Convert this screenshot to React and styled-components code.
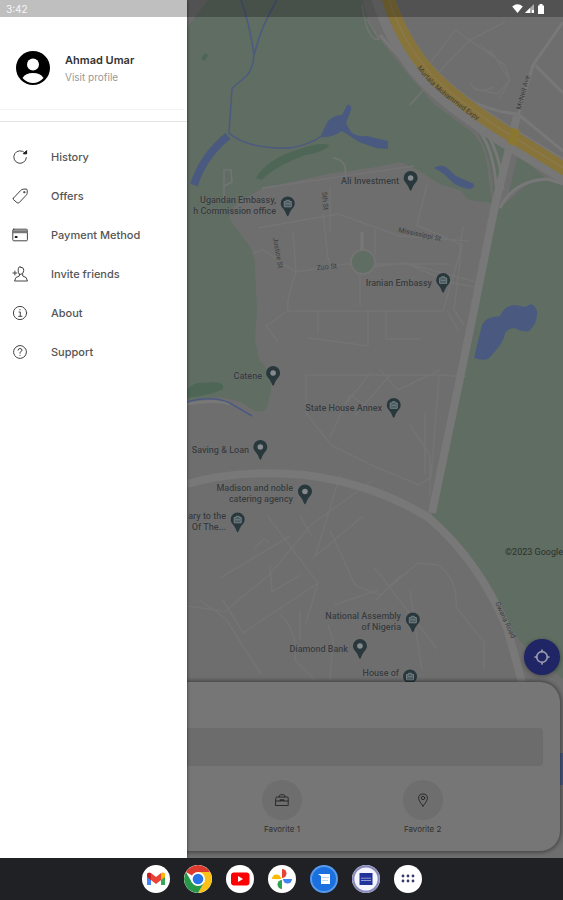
import React from "react";
import styled, { createGlobalStyle } from "styled-components";

const GlobalStyle = createGlobalStyle`
  *, *::before, *::after { box-sizing: border-box; }
  body { margin: 0; background: #6e6e6e; }
  button, input { font: inherit; color: inherit; border: 0; padding: 0; background: none; }
  svg { display: block; }
`;

const Screen = styled.div`
  position: relative;
  display: flex;
  flex-direction: column;
  min-height: 100vh;
  font-family: Inter, "Open Sans", sans-serif;
`;

const Stage = styled.main`
  position: relative;
  flex: 1;
  display: flex;
  overflow: hidden;
`;

const StatusBar = styled.header`
  position: absolute;
  inset: 0 0 auto;
  z-index: 5;
  display: flex;
  align-items: center;
  justify-content: space-between;
  height: 17px;
  padding: 0 18px 0 6px;
  background: rgba(0, 0, 0, 0.25);
  color: #f6f6f6;
  font-size: 10px;
  line-height: 16px;
`;

const StatusIcons = styled.div`
  display: flex;
  align-items: center;
  gap: 2px;
`;

const Drawer = styled.aside`
  position: relative;
  z-index: 3;
  flex: 0 0 187px;
  padding-top: 17px;
  background: #fff;
  box-shadow: 0 0 3px rgba(0, 0, 0, 0.6);
`;

const Profile = styled.a`
  display: flex;
  align-items: center;
  gap: 15px;
  height: 93px;
  margin-right: 3px;
  padding: 10px 0 0 16px;
  border-bottom: 1px solid #f4f4f4;
  color: #333;
  text-decoration: none;
`;

const ProfileText = styled.span`
  display: grid;
  gap: 1px;
`;

const ProfileName = styled.span`
  font-size: 11px;
  font-weight: 600;
  line-height: 16px;
`;

const ProfileHint = styled.span`
  color: #999;
  font-size: 10px;
  line-height: 16px;
`;

const Nav = styled.nav`
  display: grid;
  margin-top: 11px;
  padding-top: 15px;
  border-top: 1px solid #e4e4e4;
`;

const NavLink = styled.a`
  display: flex;
  align-items: center;
  gap: 23px;
  height: 39px;
  padding-left: 12px;
  color: #555;
  font-size: 11px;
  font-weight: 500;
  line-height: 16px;
  text-decoration: none;
  svg { color: #444; }
`;

const MapArea = styled.section`
  position: absolute;
  inset: 0;
  background: #6e6e6e;
`;

const MapDrawing = styled.svg`
  width: 100%;
  height: 100%;
`;

const Place = styled.div`
  position: absolute;
  top: ${(p) => p.$y}px;
  left: ${(p) => p.$x}px;
  display: flex;
  align-items: center;
  gap: 4px;
  transform: translate(-100%, -50%);
  color: #373b3e;
  font: 500 9px/11px Roboto, sans-serif;
  text-align: right;
  white-space: pre;
  text-shadow: 0 0 2px #7a7a7a;
`;

const Attribution = styled.small`
  position: absolute;
  top: 547px;
  right: 0;
  color: #2b302c;
  font: 400 9px/11px Roboto, sans-serif;
`;

const LocateButton = styled.button`
  position: absolute;
  right: 3px;
  bottom: 183px;
  display: grid;
  place-items: center;
  width: 36px;
  height: 36px;
  border-radius: 50%;
  background: #1f2565;
  color: #9a9cae;
  box-shadow: 0 1px 4px rgba(0, 0, 0, 0.35);
`;

const Sheet = styled.section`
  position: absolute;
  inset: auto 3px 7px 0;
  z-index: 2;
  padding: 46px 17px 16px 0;
  border-radius: 0 20px 20px 0;
  background: #767676;
  box-shadow: 0 0 4px 1px rgba(0, 0, 0, 0.45);
`;

const SearchField = styled.input`
  display: block;
  width: 100%;
  height: 38px;
  border-radius: 4px;
  background: #6c6c6c;
`;

const Favorites = styled.div`
  display: grid;
  grid-template-columns: repeat(3, 1fr);
  margin: 14px 50px 0 71px;
`;

const Favorite = styled.button`
  grid-column-start: ${(p) => p.$column};
  display: grid;
  justify-items: center;
  gap: 3px;
  color: #303030;
  font-size: 8px;
  line-height: 12px;
`;

const FavoriteDisc = styled.span`
  display: grid;
  place-items: center;
  width: 40px;
  height: 40px;
  border-radius: 50%;
  background: #6e6e6e;
  color: #2a2a2a;
`;

const Dock = styled.footer`
  position: relative;
  z-index: 4;
  display: flex;
  align-items: center;
  justify-content: center;
  gap: 14px;
  height: 42px;
  background: #202124;
`;

const AppButton = styled.button`
  display: grid;
  place-items: center;
  width: 28px;
  height: 28px;
  border-radius: 50%;
  background: ${(p) => p.$fill || "#fff"};
  overflow: hidden;
`;

const Stroke = ({ children, size = 16, width = 1 }) => (
  <svg width={size} height={size} viewBox="0 0 16 16" fill="none" stroke="currentColor" strokeWidth={width} strokeLinecap="round" strokeLinejoin="round" aria-hidden="true">
    {children}
  </svg>
);

const links = [
  ["History", <><path d="M14.400 8.600A6.300 6.300 0 1 1 12.600 3.600" /><path d="M11.800 4.800h2.800V2z" fill="#111" stroke="#111" /></>],
  ["Offers", <><path d="M1.400 10.200 8.500 2.600Q9.700 1.300 11.200 1.200L14 1q1.400.1 1.300 1.600l-.2 2.800q-.1 1-1 1.900l-7 7.400q-1 .8-2 0l-3.600-3q-.9-.8-.1-1.500z" /><circle cx="12.200" cy="4.200" r=".7" /></>],
  ["Payment Method", <><rect x=".8" y="2.200" width="14.600" height="11.600" rx="1" /><path d="M1 4h14.300M1 5.400h14.300" stroke="#777" strokeWidth="1.500" /><path d="M3.600 10h1" stroke="#111" strokeWidth="2" /></>],
  ["Invite friends", <><path d="M9 1.200q2.800 0 2.800 3.100T9 8.300 6.200 4.300 9 1.200zM7.400 8v2Q3 10.500 2.500 15h13q-.5-4.500-4.800-5V8" /><path d="M2.900 5v4M.9 7h4" /></>],
  ["About", <><circle cx="8" cy="8" r="6.600" /><path d="M7 7h1.300v4.200M6.600 11.300h3.300M8 4.500v.4" /></>],
  ["Support", <><circle cx="8" cy="8" r="6.400" strokeDasharray="4 .6" /><path d="M6 6.200Q6 4.500 8 4.500t2 1.600Q10 7.200 8 8.300v1M8 11.300v.2" /></>],
];

const places = [
  ["Ali Investment", 418, 181, "dot"],
  ["Ugandan Embassy,\nh Commission office", 295, 206, "case"],
  ["Iranian Embassy", 451, 283, "case"],
  ["Catene", 281, 376, "dot"],
  ["State House Annex", 401, 408, "case"],
  ["Saving & Loan", 268, 450, "dot"],
  ["Madison and noble\ncatering agency", 312, 494, "dot"],
  ["ary to the\nOf The...", 245, 522, "case"],
  ["National Assembly\nof Nigeria", 420, 622, "case"],
  ["Diamond Bank", 367, 649, "dot"],
];

const MapPin = ({ kind }) => (
  <svg width="15" height="21" viewBox="0 0 15 21" aria-hidden="true">
    <path d="M7.500.5a7 7 0 0 1 7 7c0 4.200-4.100 5.600-5.900 11.500L7.500 20.500 6.400 19C4.600 13.100.5 11.700.5 7.500a7 7 0 0 1 7-7z" fill="#29383d" />
    {kind === "dot" ? (
      <circle cx="7.500" cy="7.500" r="2.800" fill="#858b8d" />
    ) : (
      <path d="M4 5.500h2V4.300h3v1.200h2v5.300H4zM5 7.800h5" fill="#4c5c61" stroke="#748084" strokeWidth="1" />
    )}
  </svg>
);

const CityMap = () => (
  <MapArea aria-label="Map">
    <MapDrawing viewBox="0 0 563 858" preserveAspectRatio="xMinYMin slice">
      <g fill="#5f6d62">
        <path d="M208 0h155q3 20 15 37l32 40 25 28 30 22q16 10 21 32l6 44-23-3-9-10-20-6-24-15-16-7-24 5-44 6-69 15-16 9q-20 10-17 23l20 27q6 12 5 23l2 40-2 30 4 20 11 12 1 18-4 17q-4 6-12 4l-14-9-21-5-33 3V28z" />
        <path d="M478 134q25 8 33 14l-12 52h-6q2-36-15-66zM518 154l28 25q-22 0-38 18z" />
        <path d="M563 183q-30-8-48 12l-16 14-29 121-39 187 24 27 36 46 28 50 14 14 30 25z" />
      </g>
      <g fill="#4e6655">
        <path d="M256 178q12-20 44-29 20-7 29-4-2 6-24 10-32 12-43 25zM187 389q9-8 20-6 9-3 16 2v4q-12 6-36 9zM201 59l4-6 3 2-3 6z" />
      </g>
      <g fill="none" stroke="#747474" strokeWidth="1.500">
        <path d="M262 188l152-22M258 228l80-14 62 22 70 5M253 253l10-3 33 22 50-8 104 0M296 272l-3-40M288 311h155l16-55 4-30M296 272q-10 28-8 39l-22 15 12 16M323 214l5 44 5 12M360 270v36M330 187v45M375 230v25M360 268l45-5 75 20M405 263l47 20 30 5M427 185l-10 40 45 20-8 65 10 15M368 311v35l-60-8M386 311v28h35M318 311v22" />
        <path d="M306 413v-38h135l25 2M306 413l25 32 40 20 48 20 12-8 8-100M410 425l20 30v40M330 437l20-42 18 12M345 405l25-32M355 415l35-40M425 412v62M447 310l12 22M380 370l18 20 42-20" />
        <path d="M267 515l51 68-75 50-20-33M223 613l36-30 10-8 42-50 62-45M220 578l70-42M200 600l25 18 36 56M254 548l10-9 6 4M300 516l12 20M330 530l25 55 25 10 38-32 20 2q20 14 18 42l28 35v28M334 605l45-15M270 565l2 27 28-17M313 558l50-42M318 583l-12 40M340 475l-25 82M330 680l3-40-5-15M410 590l12 80M280 615q18 15 15 45l20 20M300 610v30M187 606l35 5M374 567l63 82M376 600l25-25" />
        <path d="M410 105l40-45 20-20 35-18M425 70l30-40 50 35 5 15-12 14-25-5M490 50l20 30-10 18M480 44l22 20M470 83q8 12 24 4" />
        <path d="M362 5q6 38 17 34l-12-20M333 158q15 2 12 18M224 198v-28h7l1 12-8 4" />
      </g>
      <g fill="none" stroke="#787878">
        <path d="M517 116L495 205 470 330 432 513" strokeWidth="8" />
        <path d="M563 22l-30 43-15 51M535 65l28 28M466 98q25 14 52 16l45 37M497 203q-1-72-37-88-33-25-80-80M485 130q16 25 18 60M500 208q14-28 48-29l15 5" strokeWidth="3" />
        <path d="M187 484q50-15 118-9 70 9 124 43 50 43 78 110l15 54" strokeWidth="8" />
        <path d="M362 232v28M187 404q30-5 43 0" strokeWidth="3" />
      </g>
      <path d="M382-5q14 46 43 79 25 27 80 62l66 40" fill="none" stroke="#777" strokeWidth="23" />
      <path d="M387-5q14 45 43 78 25 27 80 62l66 41" fill="none" stroke="#87743b" strokeWidth="13" />
      <path d="M387-5q14 45 43 78 25 27 80 62l66 41" fill="none" stroke="#8f7b55" strokeWidth="1" />
      <path d="M516 129l-4 16" stroke="#8b7830" strokeWidth="8" />
      <circle cx="363" cy="262" r="13" fill="#747474" />
      <circle cx="363" cy="262" r="11" fill="#5f6d62" />
      <g fill="none" stroke="#4c5a82" strokeWidth="1.500">
        <path d="M241 0q9 25 13 55M277 0q-16 26-23 55-1 17-11 24-10 8-11 10l-3 44q18 16 61 15 19-3 30-11" />
        <path d="M187 402q25-7 43 1l22 13" />
      </g>
      <path d="M228 136q-25 20-34 49" fill="none" stroke="#4a5980" strokeWidth="8" />
      <g fill="#4a5980">
        <path d="M320 137l8-16q6-6 14-6l5-10q5-1 4 5l-5 13 5 9q5 5 16 4l21 5v8l-12-1-17-6-17-11q-10 7-22 6zM434 168q5-4 12-1l10 9 18 8q1 4-4 5-12-1-20-9-6-7-16-12z" />
        <path d="M474 358l8-33q3-8 18-9 5-11 15-11l11 2q7-7 11 4 1 12-8 20-8 1-14-3-7 0-10 5-1 10-17 26-6 2-14-1zM560 753h3v32h-3z" />
      </g>
      <defs>
        <path id="expressway" d="M417 68q15 20 34 33 18 15 36 25" />
      </defs>
      <g fill="#3d3d3d" fontFamily="Roboto, sans-serif" fontSize="7">
        <text><textPath href="#expressway">Murtala Mohammed Expy</textPath></text>
        <text transform="translate(521 110) rotate(-75)">McNeil Ave</text>
        <text transform="translate(495 603) rotate(65)">Gwana Road</text>
        <text transform="translate(398 232) rotate(12)">Mississippi St</text>
        <text transform="translate(317 270) rotate(-5)">Zuo St</text>
        <text transform="translate(273 238) rotate(80)">Justice St</text>
        <text transform="translate(322 192) rotate(85)">5th St</text>
      </g>
    </MapDrawing>
    {places.map(([label, x, y, kind]) => (
      <Place key={label} $x={x} $y={y}>
        <span>{label}</span>
        <MapPin kind={kind} />
      </Place>
    ))}
    <Place $x={418} $y={679}>
      <span>{"House of\n "}</span>
      <MapPin kind="case" />
    </Place>
    <Attribution>©2023 Google</Attribution>
    <LocateButton aria-label="Find my location">
      <Stroke size={18} width={1.500}>
        <circle cx="8" cy="8" r="4.700" />
        <path d="M8 1.800v1.500M8 12.700v1.500M1.800 8h1.500M12.700 8h1.500" />
      </Stroke>
    </LocateButton>
  </MapArea>
);

const petal = "M14 14V5a4.500 4.500 0 0 1 0 9z";

const apps = [
  ["Gmail", "#fff", <><path d="M5 9v11h4V12z" fill="#4285f4" /><path d="M19 12v8h4V9z" fill="#34a853" /><path d="M5 9v3l9 7 9-7V9q-1-2-4-1l-5 4-5-4Q6 7 5 9z" fill="#ea4335" /><path d="M5 9v3l4 3V8Q6 7 5 9z" fill="#c5221f" /><path d="M19 8v7l4-3V9q-1-2-4-1z" fill="#fbbc04" /></>],
  ["Chrome", "#fff", <><path d="M14 14L1.900 7A14 14 0 0 1 26.100 7z" fill="#db3a2d" /><path d="M14 14V7h12.100A14 14 0 0 1 14 28l6-11z" fill="#fbc116" /><path d="M14 14l-6 3.500L1.900 7A14 14 0 0 0 14 28l6-10.500z" fill="#279847" /><circle cx="14" cy="14" r="7" fill="#fff" /><circle cx="14" cy="14" r="5.300" fill="#2674e8" /></>],
  ["YouTube", "#fff", <><rect x="5" y="7.500" width="18.500" height="13" rx="3" fill="#f00" /><path d="M12 11v6l5-3z" fill="#fff" /></>],
  ["Photos", "#fff", <><path d={petal} fill="#e94335" transform="translate(0 -1)" /><path d={petal} fill="#4285f4" transform="translate(1 0) rotate(90 14 14)" /><path d={petal} fill="#31a350" transform="translate(0 1) rotate(180 14 14)" /><path d={petal} fill="#fabb05" transform="translate(-1 0) rotate(270 14 14)" /></>],
  ["Messages", "#1b70df", <><circle cx="14" cy="14" r="13" fill="none" stroke="#5c99e6" strokeWidth="2" /><path d="M8 9l3 2v8h9V9z" fill="#fff" /><path d="M12 12.500h7M12 15.500h6" stroke="#bcd4f7" /></>],
  ["Cab", "#f5f5ff", <><circle cx="14" cy="14" r="12.800" fill="none" stroke="#898bbd" strokeWidth="2.400" /><rect x="7.500" y="8" width="13" height="12" fill="#20339a" /><path d="M9 13.200h10M9 15.500h10" stroke="#929bd0" /></>],
  ["All apps", "#fff", <g fill="#353a68">{[9, 14, 19].flatMap((x) => [11, 16].map((y) => <circle key={x + "-" + y} cx={x} cy={y} r="1.400" />))}</g>],
];

export default function App() {
  return (
    <>
      <GlobalStyle />
      <Screen>
        <StatusBar>
          <time>3:42</time>
          <StatusIcons>
            <svg width="11" height="9" viewBox="0 0 11 9"><path d="M5.500 9L.2 2.500Q5.500-1.800 10.800 2.500z" fill="#fff" /></svg>
            <svg width="10" height="9" viewBox="0 0 10 9"><path d="M0 9L9 0v9z" fill="#aaa" /><path d="M0 9l5-5v5z" fill="#fff" /><path d="M7 9V6h2v3z" fill="#fff" /></svg>
            <svg width="8" height="10" viewBox="0 0 8 10"><path d="M1 1.500h1.500V0h3v1.500H7V10H1z" fill="#fff" /></svg>
          </StatusIcons>
        </StatusBar>
        <Stage>
          <Drawer>
            <Profile href="#profile">
              <svg width="34" height="34" viewBox="0 0 34 34" aria-hidden="true">
                <circle cx="17" cy="17" r="17" />
                <circle cx="17" cy="13.500" r="6" fill="#fff" />
                <path d="M6.500 27q3-5 10.500-5t10.500 5Q23 32 17 32T6.500 27z" fill="#fff" />
              </svg>
              <ProfileText>
                <ProfileName>Ahmad Umar</ProfileName>
                <ProfileHint>Visit profile</ProfileHint>
              </ProfileText>
            </Profile>
            <Nav>
              {links.map(([label, icon]) => (
                <NavLink key={label} href={"#" + label.toLowerCase().replace(" ", "-")}>
                  <Stroke>{icon}</Stroke>
                  {label}
                </NavLink>
              ))}
            </Nav>
          </Drawer>
          <CityMap />
          <Sheet>
            <SearchField type="text" aria-label="Destination" />
            <Favorites>
              <Favorite $column={2}>
                <FavoriteDisc>
                  <Stroke><path d="M1.800 6q0-1 1-1h10.400q1 0 1 1v7.500H1.800zM5 5q0-2.300 1.800-2.300h2.400Q11 2.700 11 5M2 9h4.500M9.500 9H14" /><path d="M6.500 8.300h3" strokeWidth="2" /></Stroke>
                </FavoriteDisc>
                Favorite 1
              </Favorite>
              <Favorite $column={3}>
                <FavoriteDisc>
                  <Stroke><path d="M8 14Q3.600 9 3.600 6.200 3.600 2 8 2t4.400 4.200Q12.400 9 8 14z" /><circle cx="8" cy="6" r="1.700" /></Stroke>
                </FavoriteDisc>
                Favorite 2
              </Favorite>
            </Favorites>
          </Sheet>
        </Stage>
        <Dock>
          {apps.map(([name, fill, art]) => (
            <AppButton key={name} $fill={fill} aria-label={name}>
              <svg width="28" height="28" viewBox="0 0 28 28" aria-hidden="true">{art}</svg>
            </AppButton>
          ))}
        </Dock>
      </Screen>
    </>
  );
}
